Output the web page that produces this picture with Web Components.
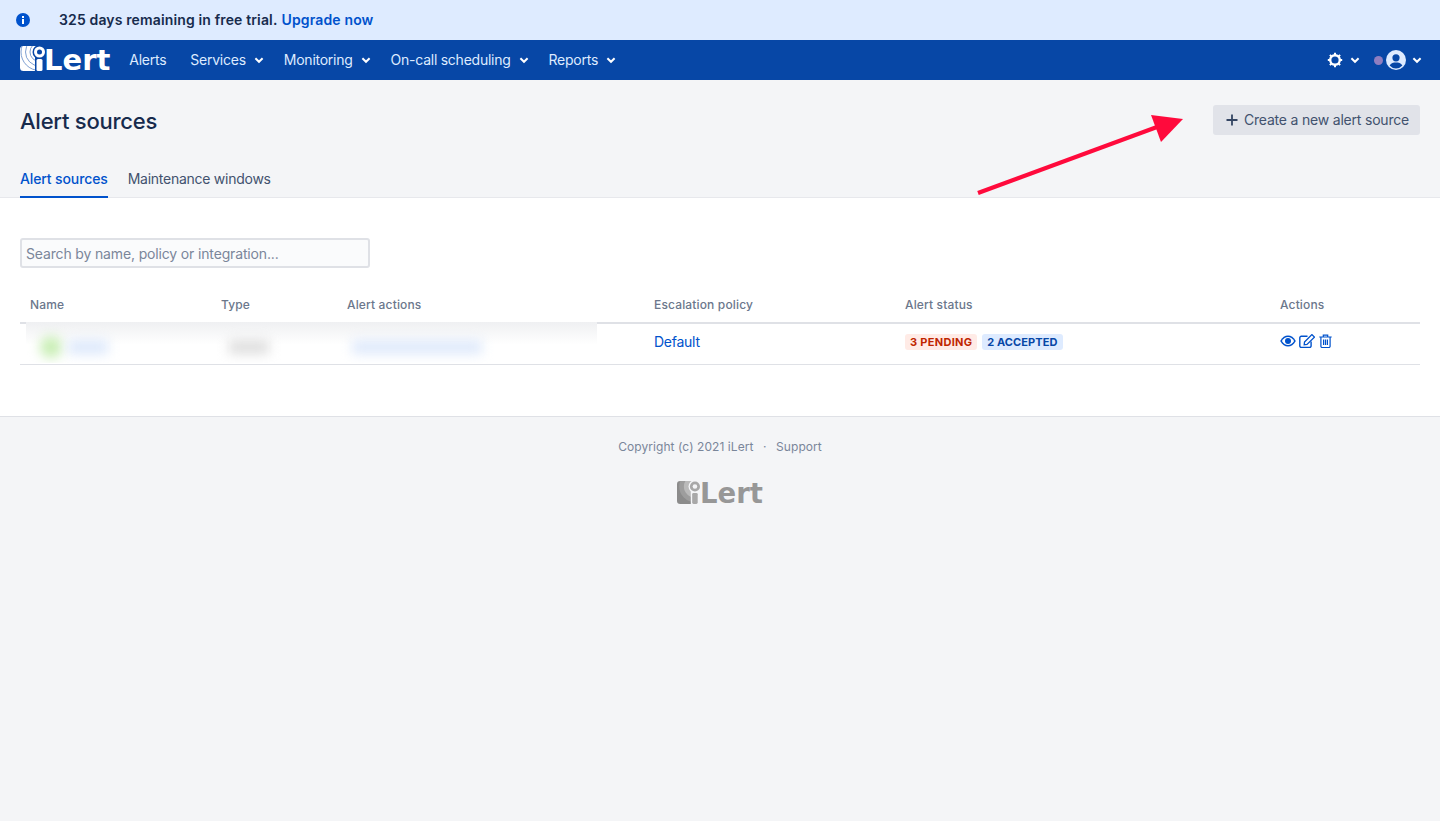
<!DOCTYPE html>
<html lang="en">
<head>
<meta charset="utf-8">
<title>Alert sources</title>
<style>
    html, body { margin: 0; height: 100%; }
    body { background: #f4f5f7; font: 14px/20px Inter, "Liberation Sans", sans-serif; color: #172b4d; }
    ilert-app { min-height: 821px; }
</style>
</head>
<body>
<ilert-app></ilert-app>
<script>
const chevron = `<svg class="chev" width="10" height="10" viewBox="0 0 10 10"><path d="M1.400 3.300 5 6.800l3.600-3.500" fill="none" stroke="currentColor" stroke-width="2"/></svg>`;

const logoMark = (size, hole, dot, art) => `
    <svg width="${size}" height="${size}" viewBox="0 0 25 25">
        <clipPath id="tile"><path d="M3.500 0H19v25H3.500A3.500 3.500 0 0 1 0 21.500v-18A3.500 3.500 0 0 1 3.500 0z"/></clipPath>
        <g clip-path="url(#tile)">${art}</g>
        <rect x="15" y="11" width="10" height="14" fill="${hole}"/>
        <circle cx="19.500" cy="6" r="7" fill="${hole}"/>
        <circle cx="19.500" cy="6" r="5.500" fill="${dot}"/>
        <circle cx="19.500" cy="6" r="2.500" fill="${hole}"/>
        <rect x="16.500" y="13" width="6" height="12" rx="1.500" fill="${dot}"/>
    </svg>`;

const whiteArt = `
    <rect width="25" height="25" fill="#fff"/>
    <g fill="none" stroke="#6f94cc" stroke-width="0.9">
        <circle cx="19.500" cy="6" r="9.500"/>
        <circle cx="19.500" cy="6" r="14"/>
        <circle cx="19.500" cy="6" r="18.500"/>
    </g>`;

const greyArt = `
    <rect width="25" height="25" fill="#8b8b8b"/>
    <circle cx="19.500" cy="6" r="17" fill="#9d9d9d"/>
    <circle cx="19.500" cy="6" r="12" fill="#bababa"/>`;

customElements.define("ilert-logo", class IlertLogo extends HTMLElement
{
    constructor()
    {
        super();
        const grey = this.hasAttribute("grey");
        const mark = grey ? logoMark(23, "#f4f5f7", "#a8a8a8", greyArt) : logoMark(25, "#0747a6", "#ffffff", whiteArt);
        this.attachShadow({mode: "open"}).innerHTML = `
            <style>
                :host { display: inline-flex; align-items: flex-end; color: ${grey ? "#979797" : "#ffffff"}; }
                svg { display: block; flex: none; }
                span { font: 700 ${grey ? 27.5 : 29}px/28px "DejaVu Sans", sans-serif; margin-left: ${grey ? 0 : -1}px; height: 25px; }
            </style>
            ${mark}<span>Lert</span>`;
    }
});

customElements.define("trial-banner", class TrialBanner extends HTMLElement
{
    constructor()
    {
        super();
        this.attachShadow({mode: "open"}).innerHTML = `
            <style>
                :host { display: flex; align-items: center; height: 40px; background: #deebff; padding-left: 16px; font-weight: 600; font-size: 14px; color: #172b4d; letter-spacing: 0.14px; }
                svg { display: block; margin-right: 29px; }
                a { color: #0052cc; text-decoration: none; margin-left: 4px; }
            </style>
            <svg width="14" height="14" viewBox="0 0 14 14">
                <circle cx="7" cy="7" r="7" fill="#0052cc"/>
                <rect x="6" y="3" width="2" height="2" fill="#fff"/>
                <rect x="6" y="6" width="2" height="5" fill="#fff"/>
            </svg>
            <span>325 days remaining in free trial.</span><a href="#">Upgrade now</a>`;
    }
});

customElements.define("nav-item", class NavItem extends HTMLElement
{
    constructor()
    {
        super();
        this.attachShadow({mode: "open"}).innerHTML = `
            <style>
                :host { display: inline-flex; align-items: center; gap: 8px; color: #deebff; font-size: 14px; letter-spacing: -0.25px; white-space: nowrap; }
                svg { display: block; color: #fff; }
            </style>
            <slot></slot>${this.hasAttribute("menu") ? chevron : ""}`;
    }
});

customElements.define("top-nav", class TopNav extends HTMLElement
{
    constructor()
    {
        super();
        this.attachShadow({mode: "open"}).innerHTML = `
            <style>
                :host { display: flex; align-items: center; height: 40px; background: #0747a6; padding: 0 18px 0 20px; color: #fff; }
                ilert-logo { margin-right: 19px; margin-top: -3px; }
                .links { display: flex; gap: 20px; }
                .plain { margin-right: 4px; }
                .right { margin-left: auto; display: flex; align-items: center; }
                .right svg { display: block; }
                .gear { margin-right: 7px; }
                .dot { width: 9px; height: 9px; border-radius: 50%; background: #8f7ec0; margin-left: 14px; }
                .user { margin: 0 6px 0 3px; }
            </style>
            <ilert-logo></ilert-logo>
            <div class="links">
                <nav-item class="plain">Alerts</nav-item>
                <nav-item menu>Services</nav-item>
                <nav-item menu>Monitoring</nav-item>
                <nav-item menu>On-call scheduling</nav-item>
                <nav-item menu>Reports</nav-item>
            </div>
            <div class="right">
                <svg class="gear" width="16" height="16" viewBox="0 0 16 16">
                    <circle cx="8" cy="8" r="4.800" fill="none" stroke="#fff" stroke-width="2.400"/>
                    <path d="M8 .8v3M8 12.200v3M.8 8h3M12.200 8h3M2.900 2.900l2 2M11.100 11.100l2 2M2.900 13.100l2-2M11.100 4.900l2-2" stroke="#fff" stroke-width="2"/>
                </svg>
                ${chevron}
                <span class="dot"></span>
                <svg class="user" width="20" height="20" viewBox="0 0 20 20">
                    <circle cx="10" cy="10" r="10" fill="#deebff"/>
                    <circle cx="10" cy="7.800" r="3.600" fill="#0747a6"/>
                    <path d="M3.600 15.500C5 12.800 7.500 12.500 10 12.500s5 .3 6.400 3A8.400 8.400 0 0 1 10 18.400a8.400 8.400 0 0 1-6.400-2.900z" fill="#0747a6"/>
                </svg>
                ${chevron}
            </div>`;
    }
});

customElements.define("page-head", class PageHead extends HTMLElement
{
    constructor()
    {
        super();
        this.attachShadow({mode: "open"}).innerHTML = `
            <style>
                :host { display: block; padding: 0 20px; height: 117px; position: relative; }
                .top { display: flex; justify-content: space-between; align-items: center; padding-top: 25px; height: 30px; }
                h1 { margin: 2px 0 0; font-size: 22px; line-height: 30px; font-weight: 500; letter-spacing: -0.25px; color: #172b4d; }
                button { display: flex; align-items: center; gap: 5px; height: 30px; width: 207px; padding: 0 0 0 12px; border: 0; border-radius: 3px; background: #e1e3e9; color: #42526e; font: 14px/20px Inter, "Liberation Sans", sans-serif; letter-spacing: -0.2px; white-space: nowrap; }
                button svg { display: block; flex: none; }
                nav { display: flex; gap: 20px; margin-top: 29px; }
                a { display: block; height: 34px; line-height: 30px; box-sizing: border-box; color: #42526e; text-decoration: none; letter-spacing: -0.26px; }
                a.on { color: #0052cc; border-bottom: 2px solid #0052cc; font-weight: 500; letter-spacing: -0.12px; }
                .arrow { position: absolute; left: 977px; top: 33px; display: block; }
            </style>
            <div class="top">
                <h1>Alert sources</h1>
                <button>
                    <svg width="14" height="14" viewBox="0 0 14 14"><path d="M7 1.500v11M1.500 7h11" stroke="#344563" stroke-width="1.800"/></svg>
                    Create a new alert source
                </button>
            </div>
            <nav><a class="on" href="#">Alert sources</a><a href="#">Maintenance windows</a></nav>
            <svg class="arrow" width="210" height="84" viewBox="0 0 210 84">
                <path d="M1 80 180 14" stroke="#ff0a3c" stroke-width="4.200" fill="none"/>
                <path d="M174 2 206 6 184 29z" fill="#ff0a3c"/>
            </svg>`;
    }
});

customElements.define("status-tag", class StatusTag extends HTMLElement
{
    constructor()
    {
        super();
        this.attachShadow({mode: "open"}).innerHTML = `
            <style>
                :host { display: inline-block; height: 16px; line-height: 16px; padding: 0 5px; border-radius: 3px; font-size: 11px; font-weight: 700; letter-spacing: 0.3px; white-space: nowrap; }
                :host([tone="red"]) { background: #ffebe6; color: #bf2600; }
                :host([tone="blue"]) { background: #deebff; color: #0747a6; letter-spacing: 0.1px; }
            </style>
            <slot></slot>`;
    }
});

customElements.define("row-actions", class RowActions extends HTMLElement
{
    constructor()
    {
        super();
        this.attachShadow({mode: "open"}).innerHTML = `
            <style>
                :host { display: inline-flex; align-items: center; gap: 3px; color: #0052cc; margin-top: -2px; }
                svg { display: block; }
            </style>
            <svg width="16" height="12" viewBox="0 0 16 12">
                <path d="M.2 6C2.300 2.300 5 .5 8 .5s5.700 1.800 7.800 5.500c-2.100 3.700-4.800 5.500-7.800 5.500S2.300 9.700.2 6z" fill="currentColor"/>
                <path d="M1.900 6C3.500 3.400 5.600 2 8 2s4.500 1.400 6.100 4C12.500 8.600 10.400 10 8 10S3.500 8.600 1.900 6z" fill="#fff"/>
                <circle cx="8" cy="6" r="3" fill="currentColor"/>
            </svg>
            <svg width="16" height="14" viewBox="0 0 16 14">
                <path d="M8.500 2.200H2.300A1.500 1.500 0 0 0 .8 3.700v8.300a1.500 1.500 0 0 0 1.500 1.500h8.300a1.500 1.500 0 0 0 1.500-1.500V7.500" fill="none" stroke="currentColor" stroke-width="1.400"/>
                <path d="M5.500 8 12.900 .6 15.400 3.100 8 10.500 5.200 10.800z" fill="none" stroke="currentColor" stroke-width="1.300"/>
            </svg>
            <svg width="13" height="14" viewBox="0 0 13 14" style="margin-left:1px">
                <path d="M.3 3h12.400M4.300 3V1.100h4.400V3M1.900 3v9.300a1.200 1.200 0 0 0 1.200 1.200h6.800a1.200 1.200 0 0 0 1.200-1.200V3M4.600 5.500v5.500M6.500 5.500v5.500M8.400 5.500v5.500" fill="none" stroke="currentColor" stroke-width="1.200"/>
            </svg>`;
    }
});

customElements.define("source-table", class SourceTable extends HTMLElement
{
    constructor()
    {
        super();
        this.attachShadow({mode: "open"}).innerHTML = `
            <style>
                :host { display: block; position: relative; }
                .row { display: grid; grid-template-columns: 191px 126px 307px 251px 375px 130px; padding-left: 10px; }
                .head { height: 35px; align-items: center; border-bottom: 2px solid #dfe1e6; font-size: 12px; font-weight: 500; letter-spacing: 0.15px; color: #6b778c; }
                .body { height: 40px; border-bottom: 1px solid #dfe1e6; line-height: 36px; }
                a { color: #0052cc; text-decoration: none; letter-spacing: -0.25px; }
                .tags { display: flex; gap: 5px; align-items: center; height: 36px; }
                .icons { display: flex; align-items: center; height: 36px; }
                .cover { position: absolute; left: 6px; top: 35px; width: 571px; height: 41px; background: linear-gradient(#eff0f2, #ffffff 55%); overflow: hidden; }
                .cover i { position: absolute; display: block; filter: blur(6px); }
                .leaf { left: 14px; top: 14px; width: 22px; height: 22px; border-radius: 50%; background: #c8eeb4; }
                .name { left: 42px; top: 18px; width: 40px; height: 14px; background: #dce8fb; }
                .type { left: 203px; top: 18px; width: 40px; height: 14px; background: #dedede; }
                .act { left: 326px; top: 18px; width: 130px; height: 14px; background: #dee9fb; }
            </style>
            <div class="row head"><span>Name</span><span>Type</span><span>Alert actions</span><span>Escalation policy</span><span>Alert status</span><span>Actions</span></div>
            <div class="row body">
                <span></span><span></span><span></span>
                <a href="#">Default</a>
                <div class="tags"><status-tag tone="red">3 PENDING</status-tag><status-tag tone="blue">2 ACCEPTED</status-tag></div>
                <div class="icons"><row-actions></row-actions></div>
            </div>
            <div class="cover"><i class="leaf"></i><i class="name"></i><i class="type"></i><i class="act"></i></div>`;
    }
});

customElements.define("page-body", class PageBody extends HTMLElement
{
    constructor()
    {
        super();
        this.attachShadow({mode: "open"}).innerHTML = `
            <style>
                :host { display: block; background: #fff; height: 220px; box-sizing: border-box; padding: 40px 20px 0; border-top: 1px solid #e7e8ec; border-bottom: 1px solid #dfe1e6; }
                input { display: block; width: 350px; height: 30px; box-sizing: border-box; margin: 0 0 19px; padding: 0 4px; border: 2px solid #dfe1e6; border-radius: 3px; background: #fafbfc; font: 14px Inter, "Liberation Sans", sans-serif; letter-spacing: -0.15px; color: #172b4d; outline: 0; }
                input::placeholder { color: #7a869a; opacity: 1; }
            </style>
            <input placeholder="Search by name, policy or integration...">
            <source-table></source-table>`;
    }
});

customElements.define("page-foot", class PageFoot extends HTMLElement
{
    constructor()
    {
        super();
        this.attachShadow({mode: "open"}).innerHTML = `
            <style>
                :host { display: flex; flex-direction: column; align-items: center; padding-top: 20px; font-size: 12px; color: #7a869a; }
                p { margin: 0 0 22px; letter-spacing: 0.07px; }
                span { margin: 0 9.500px; }
                a { color: inherit; text-decoration: none; }
            </style>
            <p>Copyright (c) 2021 iLert<span>·</span><a href="#">Support</a></p>
            <ilert-logo grey></ilert-logo>`;
    }
});

customElements.define("ilert-app", class IlertApp extends HTMLElement
{
    constructor()
    {
        super();
        this.attachShadow({mode: "open"}).innerHTML = `
            <style>:host { display: block; }</style>
            <trial-banner></trial-banner>
            <top-nav></top-nav>
            <page-head></page-head>
            <page-body></page-body>
            <page-foot></page-foot>`;
    }
});
</script>
</body>
</html>
